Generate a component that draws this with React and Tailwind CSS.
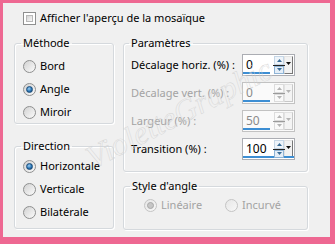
import React from 'react';

function Checkbox() {
  return (
    <span className="block w-[13px] h-[13px] border border-[#8e8f8f] bg-white p-[2px]">
      <span className="block w-full h-full border border-[#b8b8b8] bg-gradient-to-br from-[#d4d4d4] to-[#f7f7f7]" />
    </span>
  );
}

function Radio({ checked, disabled }) {
  return (
    <span
      className={
        'flex items-center justify-center w-[13px] h-[13px] rounded-full border shrink-0 ' +
        (disabled
          ? 'border-[#c4c4c4] bg-gradient-to-br from-[#e6e6e6] to-[#f8f8f8]'
          : 'border-[#8e8f8f] bg-gradient-to-br from-[#d2d2d2] to-[#fbfbfb]')
      }
    >
      {checked && (
        <span
          className={
            'block w-[7px] h-[7px] rounded-full border ' +
            (disabled
              ? 'border-[#a8a8a8] bg-[#c6c6c6]'
              : 'border-[#1b4c7a] bg-[radial-gradient(circle_at_40%_35%,#9fd0f4,#2b77b6_55%,#0f3d66)]')
          }
        />
      )}
    </span>
  );
}

function Tri({ up, color }) {
  return (
    <svg width="5" height="3" viewBox="0 0 5 3">
      <path d={up ? 'M0 3 L2.5 0 L5 3 Z' : 'M0 0 L5 0 L2.5 3 Z'} fill={color} />
    </svg>
  );
}

function Spinner({ value, bar, disabled }) {
  const arrow = disabled ? '#b4b4b4' : '#3a6d97';
  return (
    <div
      className={
        'flex w-[53px] h-[22px] border ' +
        (disabled ? 'border-[#c2c2c2] bg-[#fafafa]' : 'border-[#abadb3] bg-white')
      }
    >
      <div
        className={
          'relative flex-1 pl-[3px] leading-[19px] text-[12px] ' +
          (disabled ? 'text-[#8a8a8a]' : 'text-black')
        }
      >
        {value}
        <div className="absolute left-0 bottom-[1px] h-[2px] bg-[#3d8ed3]" style={{ width: bar }} />
      </div>
      <div className="relative flex flex-col w-[10px] py-[1px]">
        <div
          className={
            'flex-1 flex items-center justify-center border ' +
            (disabled ? 'border-[#dcdcdc]' : 'border-[#c5d6e6] bg-[#eef4fa]')
          }
        >
          <Tri up color={arrow} />
        </div>
        <div className={'h-[1px] -mx-[1px] ' + (disabled ? 'bg-[#9a9a9a]' : 'bg-[#222]')} />
        <div
          className={
            'flex-1 flex items-center justify-center border ' +
            (disabled ? 'border-[#dcdcdc]' : 'border-[#8fb4d6] bg-[#e4eef8]')
          }
        >
          <Tri color={arrow} />
        </div>
      </div>
      <div className="flex w-[10px] py-[1px] pr-[1px]">
        <div
          className={
            'flex-1 flex justify-center pt-[5px] border border-[#e2e2e2] ' +
            (disabled ? 'border-r-[#c8c8c8] border-b-[#c8c8c8] bg-[#f4f4f4]' : 'border-r-[#777] border-b-[#777] bg-[#f2f2f2]')
          }
        >
          <div>
            <Tri color={disabled ? '#b4b4b4' : '#111'} />
          </div>
        </div>
      </div>
    </div>
  );
}

function Group({ title, className, inner, children, ml = 'ml-[6px]' }) {
  return (
    <fieldset
      className={
        'border border-[#d5d9dd] rounded-[3px] shadow-[inset_1px_1px_0_#fff,1px_1px_0_#fff] ' + className
      }
    >
      <legend className={'px-[2px] leading-[16px] ' + ml}>{title}</legend>
      <div className={inner}>{children}</div>
    </fieldset>
  );
}

function RadioRow({ label, checked }) {
  return (
    <div className="flex items-center gap-[4px] h-[23px]">
      <Radio checked={checked} />
      <span>{label}</span>
    </div>
  );
}

function ParamRow({ label, disabled, value, bar }) {
  return (
    <div className="flex items-center h-[28px]">
      <span className={'w-[111px] ' + (disabled ? 'text-[#a3a3a3]' : 'text-black')}>{label}</span>
      <Spinner value={value} bar={bar} disabled={disabled} />
    </div>
  );
}

export default function App() {
  return (
    <div className="w-[335px] h-[244px] bg-[#ee6892] pt-[3px] pl-[3px] pr-[5px] pb-[7px]">
      <div className="relative h-full overflow-hidden bg-[#f0f0f0] pl-[11px] pt-[9px] font-['Noto_Sans',sans-serif] text-[11px] text-black">
        <div className="flex items-center gap-[4px] pl-[9px] h-[13px]">
          <Checkbox />
          <span>Afficher l'aperçu de la mosaïque</span>
        </div>

        <div className="flex gap-[9px] mt-[10px]">
          <div className="flex flex-col w-[100px]">
            <Group title="Méthode" className="h-[89px]" inner="pl-[8px] pt-[4px]">
              <RadioRow label="Bord" />
              <RadioRow label="Angle" checked />
              <RadioRow label="Miroir" />
            </Group>
            <Group title="Direction" className="h-[91px] mt-[14px]" inner="pl-[8px] pt-[1px]">
              <RadioRow label="Horizontale" checked />
              <RadioRow label="Verticale" />
              <RadioRow label="Bilatérale" />
            </Group>
          </div>

          <div className="flex flex-col w-[185px]">
            <Group title="Paramètres" ml="ml-[5px]" className="h-[137px]" inner="pl-[7px]">
              <ParamRow label="Décalage horiz. (%) :" value="0" bar={27} />
              <ParamRow label="Décalage vert. (%) :" value="0" bar={27} disabled />
              <ParamRow label="Largeur (%) :" value="50" bar={27} disabled />
              <ParamRow label="Transition (%) :" value="100" bar={51} />
            </Group>
            <Group title="Style d'angle" ml="ml-[6px]" className="h-[52px] mt-[6px]" inner="pl-[20px]">
              <div className="flex items-center h-[22px] text-[#a3a3a3]">
                <div className="flex items-center gap-[4px] w-[81px]">
                  <Radio checked disabled />
                  <span>Linéaire</span>
                </div>
                <div className="flex items-center gap-[4px]">
                  <Radio disabled />
                  <span>Incurvé</span>
                </div>
              </div>
            </Group>
          </div>
        </div>

        <span className="pointer-events-none absolute left-[74px] top-[94px] -rotate-[27deg] whitespace-nowrap font-['Liberation_Serif',serif] italic text-[32px] leading-none text-transparent [-webkit-text-stroke:0.4px_#d2d2d2]">
          VioletteGraphic
        </span>
      </div>
    </div>
  );
}
